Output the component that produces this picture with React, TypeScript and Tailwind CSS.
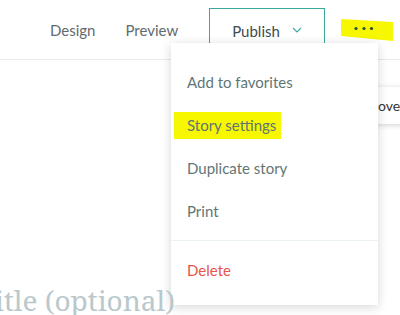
import React from "react";

export default function App() {
  const sans = { fontFamily: "Lato, 'Open Sans', sans-serif" };
  return (
    <div className="relative w-[400px] h-[315px] overflow-hidden bg-white" style={sans}>
      <header className="h-[60px] border-b border-[#e8eaea] flex items-start">
        <nav className="flex items-center h-[60px] pl-[50px] text-[15px] text-[#5f6b6e]">
          <span className="mr-[30px]">Design</span>
          <span>Preview</span>
        </nav>
      </header>
      <div className="absolute left-[209px] top-[8px] w-[116px] h-[48px] border-[1.5px] border-[#3aa89b] flex items-start justify-center pt-[11px] text-[15px] text-[#3e4c50]">
        <span>Publish</span>
        <svg className="ml-[12px] mt-[7px]" width="10" height="6" viewBox="0 0 10 6" fill="none">
          <path d="M1 1l4 4 4-4" stroke="#3aa89b" strokeWidth="1.1" />
        </svg>
      </div>
      <svg className="absolute left-[338px] top-[17px]" width="58" height="26" viewBox="0 0 58 26">
        <polygon points="3,2 55,5 55,24 3,19" fill="#f7f700" />
        <circle cx="18" cy="11.5" r="1.6" fill="#2f4a3e" />
        <circle cx="26" cy="11.5" r="1.6" fill="#2f4a3e" />
        <circle cx="33.5" cy="11.5" r="1.6" fill="#2f4a3e" />
      </svg>
      <div className="absolute left-[370px] top-[87px] w-[60px] h-[37px] bg-white shadow-[0_1px_6px_rgba(0,0,0,0.18)] flex items-center pl-[8px] text-[14px] text-[#333]">
        <span>ove</span>
      </div>
      <div className="absolute left-[171px] top-[43px] w-[207px] h-[262px] bg-white shadow-[0_2px_10px_rgba(0,0,0,0.16)] flex flex-col text-[15px] text-[#5f7676]">
        <div className="flex flex-col pt-[17px]">
          <div className="h-[44px] flex items-center pl-[16px]">Add to favorites</div>
          <div className="h-[43px] flex items-center pl-[16px]">
            <span className="bg-[#f7f700] ml-[-13px] pl-[13px] pr-[5px] py-[2px]">Story settings</span>
          </div>
          <div className="h-[43px] flex items-center pl-[16px]">Duplicate story</div>
          <div className="h-[43px] flex items-center pl-[16px]">Print</div>
        </div>
        <div className="mt-[7px] border-t border-[#eaf2f2]"></div>
        <div className="h-[58px] flex items-center pl-[16px] text-[#e8544b]">Delete</div>
      </div>
      <div className="absolute left-[-5px] top-[279px] text-[28px] text-[#b9c8cc]" style={{ fontFamily: "'Noto Serif', 'DejaVu Serif', 'Liberation Serif', serif" }}>
        itle (optional)
      </div>
    </div>
  );
}
